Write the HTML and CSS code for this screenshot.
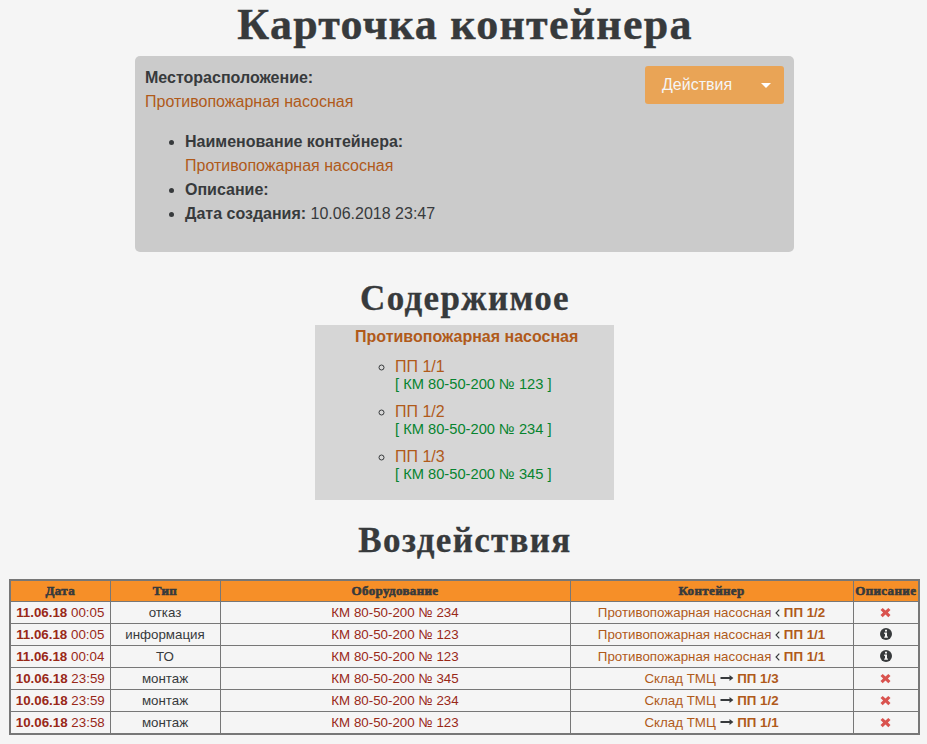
FILE: index.html
```
<!DOCTYPE html>
<html lang="ru">
<head>
<meta charset="utf-8">
<title>Карточка контейнера</title>
<link rel="stylesheet" href="styles.css">
</head>
<body>
<svg class="sprite" width="0" height="0">
  <symbol id="times" viewBox="0 0 11 11"><path d="M2.7.9 5.5 3.5 8.3.9 10.5 3 7.9 5.5 10.5 8 8.3 10.2 5.5 7.6 2.7 10.2.5 8 3.1 5.5.5 3Z" fill="currentColor"/></symbol>
  <symbol id="info" viewBox="0 0 12 12"><circle cx="6" cy="6" r="6" fill="currentColor"/><path d="M5 1.8h2v1.7H5ZM4.2 4.6H7v3.8h.9v1.3H4.2V8.4H5V5.9h-.8Z" fill="#f5f5f5"/></symbol>
  <symbol id="arrow" viewBox="0 0 14 8"><path d="M.5 3.1h9V1L13.4 4 9.5 7V4.9h-9Z" fill="currentColor"/></symbol>
  <symbol id="angle" viewBox="0 0 5 8"><path d="M4.3.7 1.1 4l3.2 3.3" fill="none" stroke="currentColor" stroke-width="1.2"/></symbol>
</svg>
<h1>Карточка контейнера</h1>
<section class="card">
  <div class="details">
    <b>Месторасположение:</b><br>
    <a>Противопожарная насосная</a>
    <ul>
      <li><b>Наименование контейнера:</b><br><a>Противопожарная насосная</a></li>
      <li><b>Описание:</b></li>
      <li><b>Дата создания:</b> 10.06.2018 23:47</li>
    </ul>
  </div>
  <button class="actions"><span>Действия</span><i class="caret"></i></button>
</section>
<h2 class="contents-title">Содержимое</h2>
<section class="contents">
  <a class="root">Противопожарная насосная</a>
  <ul>
    <li><a>ПП 1/1</a><div class="unit">[ КМ 80-50-200 № 123 ]</div></li>
    <li><a>ПП 1/2</a><div class="unit">[ КМ 80-50-200 № 234 ]</div></li>
    <li><a>ПП 1/3</a><div class="unit">[ КМ 80-50-200 № 345 ]</div></li>
  </ul>
</section>
<h2 class="events-title">Воздействия</h2>
<table>
  <colgroup><col class="c-date"><col class="c-type"><col class="c-unit"><col class="c-place"><col class="c-note"></colgroup>
  <tr><th><span>Дата</span></th><th><span>Тип</span></th><th><span>Оборудование</span></th><th><span>Контейнер</span></th><th><span>Описание</span></th></tr>
  <tr><td class="red"><b>11.06.18</b> 00:05</td><td>отказ</td><td class="red">КМ 80-50-200 № 234</td><td><a>Противопожарная насосная</a> <svg class="angle"><use href="#angle"/></svg> <a><b>ПП 1/2</b></a></td><td><svg class="times"><use href="#times"/></svg></td></tr>
  <tr><td class="red"><b>11.06.18</b> 00:05</td><td>информация</td><td class="red">КМ 80-50-200 № 123</td><td><a>Противопожарная насосная</a> <svg class="angle"><use href="#angle"/></svg> <a><b>ПП 1/1</b></a></td><td><svg class="info"><use href="#info"/></svg></td></tr>
  <tr><td class="red"><b>11.06.18</b> 00:04</td><td>ТО</td><td class="red">КМ 80-50-200 № 123</td><td><a>Противопожарная насосная</a> <svg class="angle"><use href="#angle"/></svg> <a><b>ПП 1/1</b></a></td><td><svg class="info"><use href="#info"/></svg></td></tr>
  <tr><td class="red"><b>10.06.18</b> 23:59</td><td>монтаж</td><td class="red">КМ 80-50-200 № 345</td><td><a>Склад ТМЦ</a> <svg class="arrow"><use href="#arrow"/></svg> <a><b>ПП 1/3</b></a></td><td><svg class="times"><use href="#times"/></svg></td></tr>
  <tr><td class="red"><b>10.06.18</b> 23:59</td><td>монтаж</td><td class="red">КМ 80-50-200 № 234</td><td><a>Склад ТМЦ</a> <svg class="arrow"><use href="#arrow"/></svg> <a><b>ПП 1/2</b></a></td><td><svg class="times"><use href="#times"/></svg></td></tr>
  <tr><td class="red"><b>10.06.18</b> 23:58</td><td>монтаж</td><td class="red">КМ 80-50-200 № 123</td><td><a>Склад ТМЦ</a> <svg class="arrow"><use href="#arrow"/></svg> <a><b>ПП 1/1</b></a></td><td><svg class="times"><use href="#times"/></svg></td></tr>
</table>
</body>
</html>
```
FILE: styles.css
```
* { box-sizing: border-box; }
body { margin: 0; background: #f5f5f5; color: #373a3c; font: 16px/24px "Liberation Sans", Arial, sans-serif; overflow: hidden; }
.sprite { position: absolute; }
a { color: #b05a1a; }
h1, h2 { margin: 0; text-align: center; font-family: "Liberation Serif", "Times New Roman", serif; font-weight: 700; white-space: nowrap; }
h1 { height: 56px; font-size: 44px; line-height: 50px; letter-spacing: 1.25px; padding-left: 3px; -webkit-text-stroke: .4px #373a3c; }
h2 { font-size: 35px; line-height: 40px; height: 46px; letter-spacing: 1.35px; -webkit-text-stroke: .3px #373a3c; }
.card { display: flex; justify-content: space-between; align-items: flex-start; width: 659px; height: 196px; margin-left: 135px; padding: 10px; background: #cbcbcb; border-radius: 5px; }
.card ul { margin: 16px 0 0; padding-left: 40px; }
.actions { display: flex; align-items: center; justify-content: space-between; width: 139px; height: 38px; padding: 0 13px 0 17px; border: 0; border-radius: 3px; background: #e9a456; color: #f5f5f5; font: 16px/24px "Liberation Sans", Arial, sans-serif; }
.caret { border: 5px solid transparent; border-top-color: #fff; border-bottom: 0; }
.contents-title { margin-top: 27px; padding-left: 3px; }
.contents { width: 299px; height: 175px; margin-left: 315px; padding-left: 40px; background: #d6d6d6; }
.root { font-weight: 700; }
.contents ul { margin: 9px 0 0; padding-left: 40px; list-style: circle; line-height: 18px; }
.contents li { margin-bottom: 9px; }
.unit { color: #07842f; font-size: 14.7px; line-height: 18px; margin-top: -1px; padding-bottom: 1px; }
.events-title { margin-top: 21px; height: 58px; padding-left: 3px; }
table { width: 911px; margin-left: 9px; table-layout: fixed; border-collapse: collapse; border: 2px solid #777; font-size: 13.33px; line-height: 20px; text-align: center; white-space: nowrap; }
.c-date { width: 100px; }
.c-type { width: 110px; }
.c-unit { width: 350px; }
.c-place { width: 283px; }
.c-note { width: 66px; }
td, th { height: 22px; padding: 0; line-height: 21px; border: 1px solid #777; }
th { height: 21px; line-height: 19px; background: #f68f28; font-family: "Liberation Serif", "Times New Roman", serif; font-size: 13px; letter-spacing: .35px; -webkit-text-stroke: .6px #373a3c; }
.red { color: #992818; }
td svg { display: inline-block; }
.times { width: 11px; height: 11px; color: #d9534f; vertical-align: -1px; }
.info { width: 12px; height: 12px; vertical-align: -1px; }
.arrow { width: 14px; height: 8px; vertical-align: 1px; }
.angle { width: 5px; height: 8px; vertical-align: 0; }
```
